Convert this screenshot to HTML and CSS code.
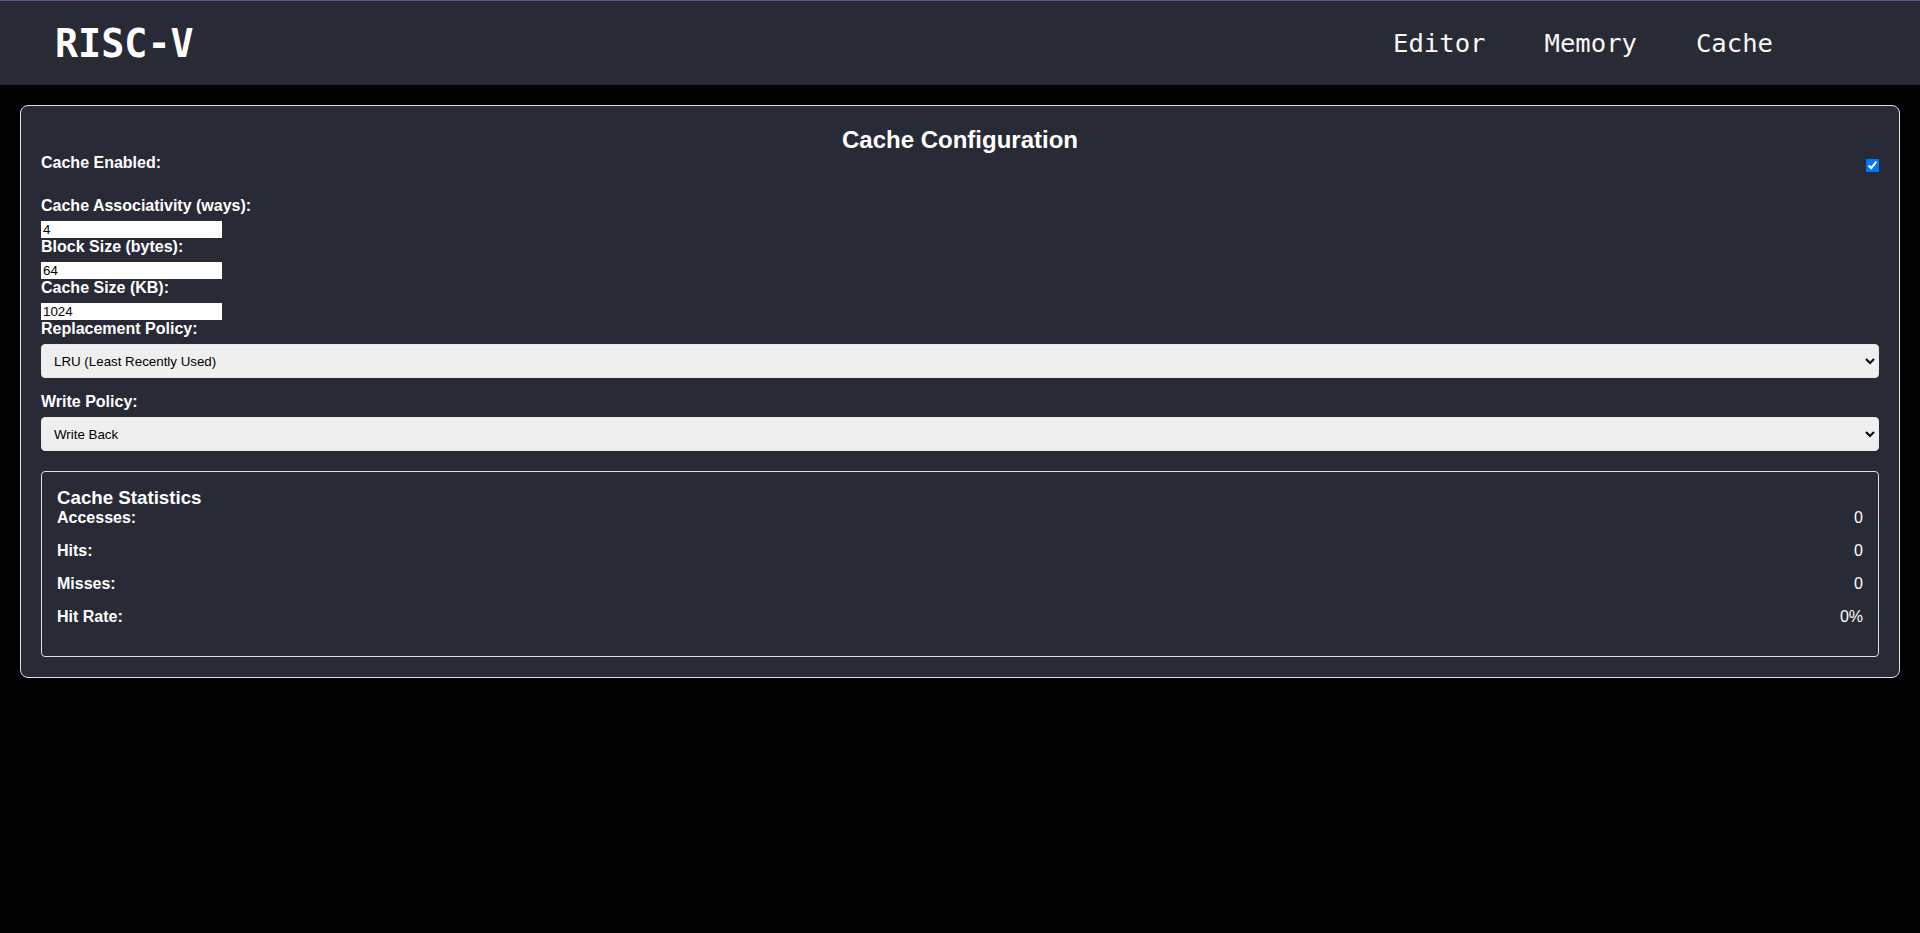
FILE: index.html
```html
<!DOCTYPE html>
<html lang="en">
<head>
<meta charset="utf-8">
<title>RISC-V Cache</title>
<link rel="stylesheet" href="styles.css">
</head>
<body>
<header class="topbar">
  <div class="logo">RISC-V</div>
  <nav class="nav">
    <a class="nav-link" href="#">Editor</a>
    <a class="nav-link" href="#">Memory</a>
    <a class="nav-link" href="#">Cache</a>
  </nav>
</header>
<main class="page">
  <section class="card">
    <h2 class="card-title">Cache Configuration</h2>
    <div class="toggle-row">
      <label class="field-label" for="enabled">Cache Enabled:</label>
      <input class="check" id="enabled" type="checkbox" checked>
    </div>
    <div class="field">
      <label class="field-label" for="ways">Cache Associativity (ways):</label>
      <input class="text-input" id="ways" type="text" value="4">
    </div>
    <div class="field">
      <label class="field-label" for="block">Block Size (bytes):</label>
      <input class="text-input" id="block" type="text" value="64">
    </div>
    <div class="field">
      <label class="field-label" for="size">Cache Size (KB):</label>
      <input class="text-input" id="size" type="text" value="1024">
    </div>
    <div class="field">
      <label class="field-label" for="repl">Replacement Policy:</label>
      <select class="select" id="repl">
        <option>LRU (Least Recently Used)</option>
        <option>FIFO (First In First Out)</option>
        <option>Random</option>
      </select>
    </div>
    <div class="field">
      <label class="field-label" for="write">Write Policy:</label>
      <select class="select" id="write">
        <option>Write Back</option>
        <option>Write Through</option>
      </select>
    </div>
    <div class="stats">
      <h3 class="stats-title">Cache Statistics</h3>
      <div class="stat-row"><span class="stat-label">Accesses:</span><span class="stat-value">0</span></div>
      <div class="stat-row"><span class="stat-label">Hits:</span><span class="stat-value">0</span></div>
      <div class="stat-row"><span class="stat-label">Misses:</span><span class="stat-value">0</span></div>
      <div class="stat-row"><span class="stat-label">Hit Rate:</span><span class="stat-value">0%</span></div>
    </div>
  </section>
</main>
</body>
</html>
```
FILE: styles.css
```css
* {
  box-sizing: border-box;
}

body {
  margin: 0;
  background: #000;
  color: #fff;
  font-family: "Liberation Sans", Arial, sans-serif;
  font-size: 16px;
}

.topbar {
  height: 85px;
  background: #282a36;
  border-top: 1px solid #6c4a9c;
  display: flex;
  align-items: center;
  justify-content: space-between;
  padding: 0 147px 0 55px;
}

.logo {
  font-family: "DejaVu Sans Mono", monospace;
  font-weight: bold;
  font-size: 38.4px;
  color: #fff;
}

.nav {
  display: flex;
  gap: 59px;
}

.nav-link {
  font-family: "DejaVu Sans Mono", monospace;
  font-size: 25.6px;
  color: #f8f8f2;
  text-decoration: none;
}

.page {
  padding: 20px;
}

.card {
  background: #282a36;
  border: 1px solid #e0e0e0;
  border-radius: 8px;
  padding: 20px;
}

.card-title {
  margin: 0;
  text-align: center;
  font-size: 24px;
  font-weight: bold;
}

.field-label {
  display: block;
  font-weight: bold;
  margin-bottom: 6px;
}

.toggle-row {
  display: flex;
  justify-content: space-between;
  align-items: flex-start;
  margin-bottom: 25px;
}

.toggle-row .field-label {
  margin-bottom: 0;
}

.check {
  margin: 5px 0 0 0;
  width: 13px;
  height: 13px;
}

.text-input {
  display: block;
  width: 181px;
  height: 17px;
  border: none;
  padding: 1px 2px;
  font-family: "Liberation Sans", Arial, sans-serif;
  font-size: 13.333px;
  background: #fff;
  color: #000;
}

.select {
  display: block;
  width: 100%;
  height: 34px;
  margin-bottom: 15px;
  padding: 0 8px;
  border: 1px solid #e8e8e8;
  border-radius: 4px;
  background-color: #efefef;
  color: #000;
  font-family: "Liberation Sans", Arial, sans-serif;
  font-size: 13.333px;
}

.stats {
  margin-top: 20px;
  border: 1px solid #e0e0e0;
  border-radius: 4px;
  padding: 15px;
}

.stats-title {
  margin: 0;
  font-size: 18.72px;
  font-weight: bold;
}

.stat-row {
  display: flex;
  justify-content: space-between;
  margin-bottom: 15px;
}

.stat-label {
  font-weight: bold;
}
```
